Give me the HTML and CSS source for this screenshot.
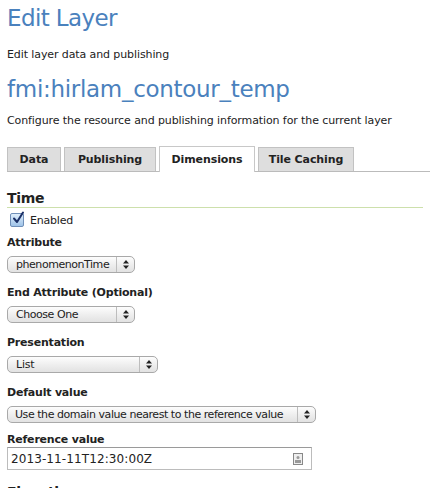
FILE: index.html
```html
<!DOCTYPE html>
<html>
<head>
<meta charset="utf-8">
<link rel="stylesheet" href="styles.css">
</head>
<body>
<div class="page">
  <h1 class="title">Edit Layer</h1>
  <p class="desc">Edit layer data and publishing</p>
  <h2 class="title layer">fmi:hirlam_contour_temp</h2>
  <p class="desc">Configure the resource and publishing information for the current layer</p>

  <div class="tabs">
    <div class="tab">Data</div>
    <div class="tab">Publishing</div>
    <div class="tab active">Dimensions</div>
    <div class="tab">Tile Caching</div>
  </div>

  <h3 class="section">Time</h3>
  <label class="check">
    <span class="box"><svg width="14" height="14" viewBox="0 0 14 14"><path d="M3 7.5 L6 11 L12 1.5" fill="none" stroke="#1a2f66" stroke-width="2" stroke-linecap="round" stroke-linejoin="round"/></svg></span>
    <span>Enabled</span>
  </label>

  <div class="field first">
    <div class="label">Attribute</div>
    <div class="select w1"><span class="val">phenomenonTime</span><span class="arr"><svg width="6" height="9" viewBox="0 0 6 9"><path d="M0 3.5 L3 0 L6 3.5Z M0 5.5 L3 9 L6 5.5Z" fill="#222"/></svg></span></div>
  </div>
  <div class="field">
    <div class="label">End Attribute (Optional)</div>
    <div class="select w1"><span class="val">Choose One</span><span class="arr"><svg width="6" height="9" viewBox="0 0 6 9"><path d="M0 3.5 L3 0 L6 3.5Z M0 5.5 L3 9 L6 5.5Z" fill="#222"/></svg></span></div>
  </div>
  <div class="field">
    <div class="label">Presentation</div>
    <div class="select w2"><span class="val">List</span><span class="arr"><svg width="6" height="9" viewBox="0 0 6 9"><path d="M0 3.5 L3 0 L6 3.5Z M0 5.5 L3 9 L6 5.5Z" fill="#222"/></svg></span></div>
  </div>
  <div class="field">
    <div class="label">Default value</div>
    <div class="select w3"><span class="val">Use the domain value nearest to the reference value</span><span class="arr"><svg width="6" height="9" viewBox="0 0 6 9"><path d="M0 3.5 L3 0 L6 3.5Z M0 5.5 L3 9 L6 5.5Z" fill="#222"/></svg></span></div>
  </div>
  <div class="field ref">
    <div class="label">Reference value</div>
    <div class="input"><span>2013-11-11T12:30:00Z</span>
      <svg class="card" width="10" height="12" viewBox="0 0 10 12"><rect x="0.5" y="0.5" width="9" height="11" fill="#eee" stroke="#888"/><circle cx="5" cy="4.5" r="1.5" fill="#999"/><rect x="2" y="7" width="6" height="3" fill="#999"/></svg>
    </div>
  </div>
  <h3 class="section cut">Elevation</h3>
</div>
</body>
</html>
```
FILE: styles.css
```css
html, body {
  margin: 0;
  padding: 0;
  background: #fff;
  overflow: hidden;
}
body {
  font-family: "DejaVu Sans", Verdana, sans-serif;
  font-size: 11px;
  color: #222;
}
.page {
  padding: 0 7px;
  width: 430px;
  box-sizing: border-box;
}
.title {
  margin: 0;
  font-weight: normal;
  color: #4a81bd;
  font-size: 23px;
  line-height: 28px;
  letter-spacing: -0.3px;
}
h1.title {
  padding-top: 4px;
  letter-spacing: -0.6px;
}
.desc {
  margin: 0;
  line-height: 14px;
  letter-spacing: -0.1px;
}
h1.title + .desc {
  margin-top: 16px;
}
.layer {
  margin-top: 13px;
}
.layer + .desc {
  margin-top: 11px;
}
.tabs {
  display: flex;
  margin-top: 18px;
  margin-right: -7px;
  border-bottom: 1px solid #bbb;
  height: 25px;
  align-items: flex-end;
  gap: 3px;
}
.tab {
  height: 24px;
  box-sizing: border-box;
  border: 1px solid #c2c2c2;
  border-bottom: none;
  background: #dedede;
  font-weight: bold;
  font-size: 11px;
  letter-spacing: -0.1px;
  color: #222;
  display: flex;
  align-items: center;
  justify-content: center;
}
.tab:nth-child(1) { width: 54px; }
.tab:nth-child(2) { width: 92px; }
.tab:nth-child(3) { width: 96px; }
.tab:nth-child(4) { width: 96px; }
.tab.active {
  background: #fff;
  height: 26px;
  margin-bottom: -1px;
  border-color: #c8c8c8;
}
.section {
  margin: 17px 0 0;
  font-size: 14px;
  font-weight: bold;
  line-height: 18px;
  letter-spacing: -0.3px;
  border-bottom: 1px solid #cde0ac;
}
.check {
  display: flex;
  align-items: center;
  gap: 6px;
  margin-top: 5px;
  padding-left: 3px;
  letter-spacing: -0.2px;
}
.box {
  width: 12px;
  height: 12px;
  border: 1px solid #6f8fb8;
  border-radius: 2px;
  background: linear-gradient(#dfeefb, #9fc3e8);
  position: relative;
}
.box svg {
  position: absolute;
  left: 0;
  top: -3px;
}
.field {
  margin-top: 13px;
}
.field.first {
  margin-top: 9px;
}
.field.ref {
  margin-top: 10px;
}
.label {
  font-weight: bold;
  font-size: 11px;
  line-height: 14px;
  letter-spacing: -0.2px;
}
.select {
  margin-top: 6px;
  height: 17px;
  box-sizing: border-box;
  border: 1px solid #a9a9a9;
  border-radius: 5px;
  background: linear-gradient(#fdfdfd, #ececec 60%, #e2e2e2);
  display: flex;
  align-items: center;
  font-size: 11px;
  letter-spacing: -0.2px;
}
.select .val {
  flex: 1;
  padding-left: 8px;
  white-space: nowrap;
  overflow: hidden;
}
.select .arr {
  width: 17px;
  height: 100%;
  border-left: 1px solid #bdbdbd;
  display: flex;
  align-items: center;
  justify-content: center;
}
.w1 { width: 128px; letter-spacing: -0.45px; }
.w2 { width: 151px; }
.w3 { width: 309px; letter-spacing: -0.45px; }
.w3 .val { padding-left: 7px; }
.input {
  margin-top: 0;
  width: 305px;
  height: 23px;
  box-sizing: border-box;
  border: 1px solid #bcbcbc;
  border-top-color: #9a9a9a;
  display: flex;
  align-items: center;
  justify-content: space-between;
  padding: 0 8px 0 3px;
  font-size: 12px;
  letter-spacing: 0.1px;
}
.card {
  display: block;
}
.cut {
  margin-top: 13px;
  border-bottom: none;
}
```
